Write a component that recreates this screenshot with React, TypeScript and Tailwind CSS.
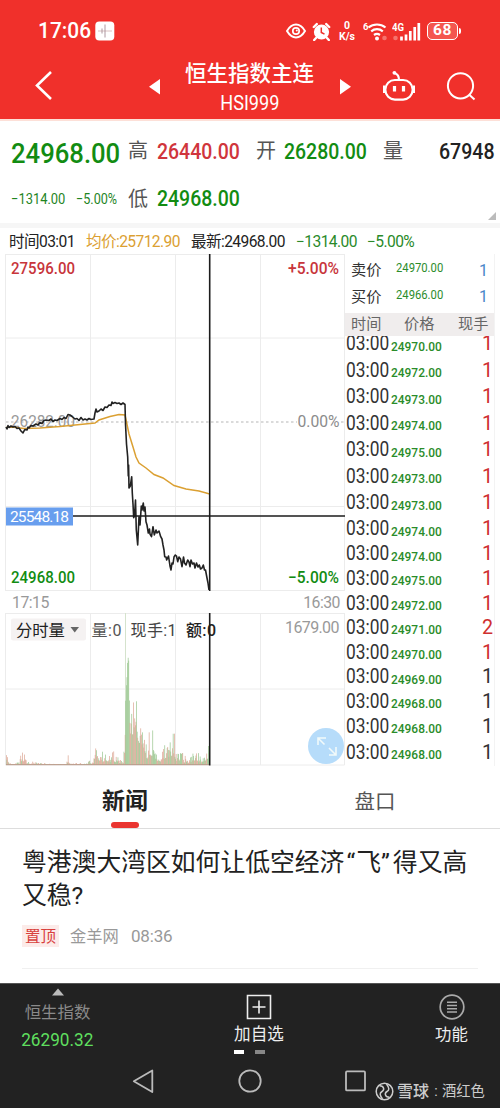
import clsx from "clsx";

type Tick = { price: string; qty: number; up: boolean; h: string };

const ticks: Tick[] = [
  { price: "24970.00", qty: 1, up: true, h: "h-[26.5px]" },
  { price: "24972.00", qty: 1, up: true, h: "h-[26.5px]" },
  { price: "24973.00", qty: 1, up: true, h: "h-[26.5px]" },
  { price: "24974.00", qty: 1, up: true, h: "h-[26.5px]" },
  { price: "24975.00", qty: 1, up: true, h: "h-[26.5px]" },
  { price: "24973.00", qty: 1, up: true, h: "h-[26.5px]" },
  { price: "24973.00", qty: 1, up: true, h: "h-[26.5px]" },
  { price: "24974.00", qty: 1, up: true, h: "h-[25.5px]" },
  { price: "24974.00", qty: 1, up: true, h: "h-[24.6px]" },
  { price: "24975.00", qty: 1, up: true, h: "h-[24.6px]" },
  { price: "24972.00", qty: 1, up: true, h: "h-[24.6px]" },
  { price: "24971.00", qty: 2, up: true, h: "h-[24.6px]" },
  { price: "24970.00", qty: 1, up: true, h: "h-[24.6px]" },
  { price: "24969.00", qty: 1, up: false, h: "h-[24.6px]" },
  { price: "24968.00", qty: 1, up: false, h: "h-[24.6px]" },
  { price: "24968.00", qty: 1, up: false, h: "h-[24.6px]" },
  { price: "24968.00", qty: 1, up: false, h: "h-[27.4px]" },
];

const priceLine =
  "6,173 7,175 8,171.5 9,173.5 11,172 13,173 15,172.5 17,174.5 19,174 21,177 23,179 24,177 25,175.5 27,176 28,173 29,174 31,171.5 33,172 36,170 38,171 40,168.5 42,169.5 44,166.5 46,166 49,166.5 51,165 53,167.5 55,166 57,166.5 60,164.5 62,165.5 64,163.5 66,164.5 68,160.5 70,161 72,162.5 75,165 77,164.5 79,166.5 81,163.5 83,166 85,165 87,166 89,164.5 91,165.5 94,165 95,159 96,155 97,158 99,157 101,155 103,156.5 105,153 107,153.5 109,151 111,151.5 112,148 113,149.5 115,148.5 117,149.5 119,149 121,150.5 123,149 125,150.5 125.5,170 126.5,190 127.7,203 128.3,222 128.6,211 129,234 130.3,232 131.7,222.7 132.3,239 133,250 133.7,263.7 134.5,262 135.5,246 136.3,276 137.7,291 138.3,278 139,262.7 140,271 141.3,252 142,256 143.3,249 144,257 145,253 146,267.7 147,271 148.3,279 149.5,275 150,280 151.5,282.7 153,272.7 154.3,281 156,276 157,279 159,277 160.7,282.7 162,285 163,291 164,296 164.7,302.7 166,303 166.7,306 168.5,302 170,312 171,316 172,309 173,310 174,303 175.3,301 176.5,302 177.7,307.7 179,303 180.5,305 182,312.7 183.5,303 184.5,309 186,311 187.7,306 189,308 190,312.7 191,306 192.5,310 194,309 195,314 196.5,309 198,313 199.3,311 200.5,315 202,314 203.3,311 204.5,316 205.5,316 207,324 208,329 208.7,334 209,336";

const averageLine =
  "6,173.5 12,173 24,174.5 40,174 60,172.5 80,170.5 95,169 99,166 110,162.5 119,160.5 125,161 126.5,168 129,180 133,193 136,203 139,209 146,214 154,220.5 163,224 174,231.5 186,235 199,237 208,239.5 210,240";

// [x, bar height] knots of the volume envelope
const envelope = [
  [6, 38], [6.8, 12], [9, 5], [12, 2], [19, 3], [21, 12], [23, 15], [26, 5], [34, 3], [45, 2],
  [66, 1], [68, 13], [69.5, 2], [87, 2], [89, 11], [91, 2], [94, 10], [95, 38], [96.5, 28], [98, 12],
  [101, 20], [103, 10], [106, 17], [109, 10], [112, 18], [116, 9], [123, 4], [125, 60], [126.2, 96],
  [128.4, 112], [129.2, 62], [132, 52], [133.5, 76], [136.5, 66], [138.5, 40], [141, 46], [143, 30],
  [147, 24], [149, 42], [151, 28], [153.5, 46], [156, 17], [160, 13], [165, 26], [170, 32], [174, 38],
  [176, 14], [180, 14], [181, 28], [183, 10], [188, 8], [195, 18], [200, 9], [205, 16], [209, 30],
];

function envelopeAt(x: number) {
  for (let i = 1; i < envelope.length; i++) {
    const [x0, h0] = envelope[i - 1];
    const [x1, h1] = envelope[i];
    if (x <= x1) return h0 + ((x - x0) / (x1 - x0)) * (h1 - h0);
  }
  return 0;
}

function buildBars() {
  let seed = 11;
  const rnd = () => {
    seed = (seed * 16807) % 2147483647;
    return seed / 2147483647;
  };
  const bars: { x: number; h: number; color: string }[] = [];
  for (let x = 6; x < 209; x += 0.6) {
    const r = rnd();
    const opening = x > 125 && x < 129.5;
    const base = x > 129 && x < 143 ? 0.5 : 0.26;
    const h = envelopeAt(x) * (opening ? 0.85 + 0.15 * r : base + (1 - base) * r * r * r);
    const greenShare = opening ? 0.9 : x > 143 ? 0.5 : 0.35;
    bars.push({ x, h: Math.max(h, 0.8), color: rnd() < greenShare ? "#98c68e" : "#dca592" });
  }
  return bars;
}

const bars = buildBars();

function StatusBar() {
  return (
    <div className="flex h-[62px] items-center pl-[38px] text-white">
      <span className="w-[57px] origin-left scale-x-[0.95] text-[22px] font-medium leading-none">17:06</span>
      <svg width="20" height="20" viewBox="0 0 20 20">
        <rect x="0.3" y="0.5" width="19" height="19" rx="4" fill="#fff" />
        <path d="M3 10h14" stroke="#e2cccc" strokeWidth="1.2" />
        <path d="M10 3.5v13M7 7.5v5" stroke="#a58c96" strokeWidth="0.9" />
      </svg>
      <svg className="ml-[171px]" width="20" height="16" viewBox="0 0 20 16" fill="none" stroke="#fff">
        <path d="M1 8C4 3 7 1.6 10 1.6S16 3 19 8c-3 5-6 6.4-9 6.4S4 13 1 8z" strokeWidth="2" />
        <circle cx="10" cy="8" r="3.2" strokeWidth="1.7" />
        <circle cx="10.8" cy="7.6" r="1" fill="#fff" stroke="none" />
      </svg>
      <svg className="ml-[6px]" width="19" height="19" viewBox="0 0 19 19">
        <circle cx="9.5" cy="10" r="7.6" fill="#fff" />
        <path d="M1.800 5 4.800 2M17.200 5 14.200 2M4 16l-1.800 2M15 16l1.800 2" stroke="#fff" strokeWidth="2.400" strokeLinecap="round" />
        <path d="M9.300 5.600v4.900l3.200 1.700" stroke="#f0302b" strokeWidth="1.500" fill="none" />
      </svg>
      <div className="ml-[6px] flex h-[22px] w-[20px] flex-col items-center justify-between text-[10.500px] font-bold leading-[11px]">
        <span>0</span>
        <span>K/s</span>
      </div>
      <svg className="ml-[6px]" width="25" height="21" viewBox="0 0 25 21" fill="none" stroke="#fff">
        <text x="0" y="9" fontSize="9.500" fontWeight="700" fill="#fff" stroke="none">6</text>
        <path d="M5.500 6.500a13.500 13.500 0 0 1 17 0M8.200 10.300a9 9 0 0 1 11.600 0M11 14a5 5 0 0 1 6 0" strokeWidth="2.200" />
        <circle cx="14" cy="17.600" r="2" fill="#fff" stroke="none" />
        <circle cx="21.500" cy="17" r="2.300" fill="#f5736d" stroke="none" />
      </svg>
      <svg className="ml-[4px]" width="30" height="21" viewBox="0 0 30 21">
        <text x="0" y="9.500" fontSize="10.500" fontWeight="700" fill="#fff" textLength="12" lengthAdjust="spacingAndGlyphs">4G</text>
        <circle cx="3.500" cy="17" r="2.300" fill="#f5736d" />
        <path d="M9.500 19.500v-4M14 19.500v-6M18.300 19.500V10M22.700 19.500V6M26.800 19.500V2" stroke="#fff" strokeWidth="2.700" />
      </svg>
      <div className="ml-[5px] flex h-[18px] w-[31px] items-center justify-center rounded-[5px] border-[1.5px] border-white bg-[#f4564f] text-[15.500px] font-bold leading-none tracking-[0.500px]">
        68
      </div>
      <div className="ml-px h-[6px] w-[2px] rounded-r bg-white" />
    </div>
  );
}

function TitleBar() {
  return (
    <div className="flex h-[57px] text-white">
      <div className="w-[146px] pl-[34px] pt-[8px]">
        <svg width="20" height="31" viewBox="0 0 20 31" fill="none">
          <path d="M17 2 3 15.500 17 29" stroke="#fff" strokeWidth="2.600" />
        </svg>
      </div>
      <svg className="mt-[16px]" width="16" height="18" viewBox="0 0 16 18">
        <path d="M3 8.800 14 1v15.600z" fill="#fff" />
      </svg>
      <div className="flex w-[175px] flex-col items-center">
        <h1 className="text-[21.500px] font-medium leading-[24px]">恒生指数主连</h1>
        <span className="mt-[6px] scale-x-[0.93] text-[19.500px] leading-[24px]">HSI999</span>
      </div>
      <svg className="mt-[16px]" width="16" height="18" viewBox="0 0 16 18">
        <path d="M14 8.800 3 1v15.600z" fill="#fff" />
      </svg>
      <svg className="ml-[29px] mt-[6px]" width="34" height="34" viewBox="0 0 34 34" fill="none" stroke="#fff">
        <rect x="3.400" y="12" width="27.200" height="19.600" rx="9.500" strokeWidth="2.100" />
        <path d="M2 17.500v7.500M32 17.500v7.500" strokeWidth="2" />
        <path d="M17 12c0-3.500-.8-5.600-4-6.800" strokeWidth="2.200" />
        <circle cx="12.400" cy="4.800" r="1.900" fill="#fff" stroke="none" />
        <path d="M12.500 18v5.500M21.500 18v5.500" strokeWidth="3.200" />
      </svg>
      <svg className="ml-[29px] mt-[9px]" width="32" height="32" viewBox="0 0 32 32" fill="none" stroke="#fff" strokeWidth="2">
        <circle cx="15.500" cy="14.800" r="12.600" />
        <path d="m24 23.500 5.500 5" />
      </svg>
    </div>
  );
}

function Quote() {
  return (
    <section className="h-[102px] overflow-hidden pt-[15px] font-medium leading-none">
      <div className="flex h-[32px] items-center pl-[11px]">
        <span className="w-[117px] origin-left scale-x-[0.9] pt-[4px] text-[28.500px] text-[#128c12]">24968.00</span>
        <span className="w-[29px] pb-[2px] text-[20px] font-normal text-[#555]">高</span>
        <span className="w-[99px] origin-left scale-x-[0.905] text-[21.500px] text-[#d0353c]">26440.00</span>
        <span className="w-[28px] pb-[2px] text-[20px] font-normal text-[#555]">开</span>
        <span className="w-[99px] origin-left scale-x-[0.905] text-[21.500px] text-[#128c12]">26280.00</span>
        <span className="w-[40px] pb-[2px] text-[20px] font-normal text-[#555]">量</span>
        <span className="flex-1 origin-right scale-x-[0.91] pr-[6px] text-right text-[21.500px] text-[#222]">67948</span>
      </div>
      <div className="mt-[15px] flex h-[32px] items-center pl-[11px]">
        <span className="w-[65px] origin-left scale-x-[0.88] text-[14.700px] font-normal text-[#1f851f]">−1314.00</span>
        <span className="w-[52px] origin-left scale-x-[0.86] text-[14.700px] font-normal text-[#1f851f]">−5.00%</span>
        <span className="w-[29px] pb-px text-[20px] font-normal text-[#555]">低</span>
        <span className="w-[338px] origin-left scale-x-[0.905] text-[21.500px] text-[#128c12]">24968.00</span>
      </div>
      <div className="flex justify-end pr-[4px]">
        <svg width="8" height="8" viewBox="0 0 8 8" className="-mt-[3px]">
          <path d="M8 0v8H0z" fill="#bbb" />
        </svg>
      </div>
    </section>
  );
}

function PriceChart() {
  return (
    <svg className="block" width="345" height="337" viewBox="0 0 345 337">
      <g stroke="#ececec" fill="none">
        <path d="M5.500 .5H344.500M5.500 84H344.500M5.500 252.500H344.500M5.500 336.500H344.500" />
        <path d="M5.500 0V337M90.500 0V337M175.500 0V337M260.500 0V337M344.500 0V337" />
      </g>
      <path d="M6 168H344" stroke="#b5b5b5" strokeWidth="1.200" strokeDasharray="2.500 2.500" />
      <g fontWeight="500" fontSize="16.500">
        <text x="11" y="20" fill="#c8353b" textLength="64" lengthAdjust="spacingAndGlyphs">27596.00</text>
        <text x="288" y="20" fill="#c8353b" textLength="51" lengthAdjust="spacingAndGlyphs">+5.00%</text>
        <text x="11" y="172.500" fill="#999" fontWeight="400" textLength="64" lengthAdjust="spacingAndGlyphs">26282.00</text>
        <rect x="297" y="160" width="43" height="15" fill="#fff" />
        <text x="297.500" y="172.500" fill="#8c8c8c" fontWeight="400" textLength="42" lengthAdjust="spacingAndGlyphs">0.00%</text>
        <text x="11" y="328.500" fill="#128c12" textLength="64" lengthAdjust="spacingAndGlyphs">24968.00</text>
        <text x="288" y="328.500" fill="#128c12" textLength="51" lengthAdjust="spacingAndGlyphs">−5.00%</text>
      </g>
      <polyline points={averageLine} fill="none" stroke="#dba032" strokeWidth="1.500" />
      <polyline points={priceLine} fill="none" stroke="#222" strokeWidth="1.600" strokeLinejoin="round" />
      <path d="M6 262H345M209.700 0V337" stroke="#1c1c1c" strokeWidth="1.600" />
      <rect x="6" y="253.500" width="67" height="18" fill="#689eee" />
      <text x="10" y="268" fontSize="15.500" fill="#fff" textLength="59">25548.18</text>
    </svg>
  );
}

function VolumeChart() {
  return (
    <div className="relative">
      <svg className="block" width="345" height="153" viewBox="0 0 345 153">
        <g stroke="#ececec" fill="none">
          <path d="M5.500 .5H344.500M5.500 76H344.500M5.500 152H344.500" />
          <path d="M5.500 0V152M90.500 0V152M175.500 0V152M260.500 0V152M344.500 0V152" />
        </g>
        <path d="M125.500 0V152" stroke="#d5e3cd" />
        {bars.map((bar) => (
          <rect key={bar.x} x={bar.x} y={152 - bar.h} width="0.700" height={bar.h} fill={bar.color} />
        ))}
        <path d="M6 151.700H209" stroke="#b99a8c" strokeWidth="1" />
        <rect x="11" y="5.500" width="75" height="22" rx="2" fill="#f5f2f2" />
        <text x="16" y="22.500" fontSize="16.300" fill="#222">分时量</text>
        <path d="M70.500 14h8.500l-4.250 5.500z" fill="#666" />
        <g fontSize="16">
          <text x="91.500" y="22.500" fill="#555" textLength="30">量:0</text>
          <text x="130.500" y="22.500" fill="#444" textLength="46">现手:1</text>
          <text x="186" y="22.500" fill="#222" fontWeight="500" textLength="30">额:0</text>
          <text x="285" y="20" fill="#999" textLength="54.500">1679.00</text>
        </g>
        <path d="M209.700 0V152.500" stroke="#1c1c1c" strokeWidth="1.600" />
      </svg>
      <button className="absolute right-[1px] top-[115px] size-9 rounded-full bg-[#b6dcfa]" aria-label="expand">
        <svg width="36" height="36" viewBox="0 0 36 36" fill="none" stroke="#f2fafa" strokeWidth="1.600">
          <path d="M10 17v-7h8M10.500 10.500l6 6M28 19v8h-7M27.500 26.500l-6.500-6.500" />
        </svg>
      </button>
    </div>
  );
}

function OrderBook() {
  return (
    <aside className="h-[512px] w-[150px] overflow-hidden border-r border-[#f3f3f3] leading-none">
      {[
        ["卖价", "24970.00"],
        ["买价", "24966.00"],
      ].map(([label, price]) => (
        <div key={label} className="flex h-[26.500px] items-center pl-[6px] pt-[7px]">
          <span className="w-[45px] text-[15.200px] text-[#333]">{label}</span>
          <span className="w-[78px] origin-left scale-x-[0.9] pb-[5px] text-[12.500px] text-[#2c8c2c]">{price}</span>
          <span className="w-[14px] text-right text-[16px] text-[#4a86c8]">1</span>
        </div>
      ))}
      <div className="relative z-10 mt-[6px] flex h-[23px] items-center bg-[#f0eded] pl-[6px] pt-px text-[15.200px] text-[#666]">
        <span className="w-[53px]">时间</span>
        <span className="w-[54px]">价格</span>
        <span>现手</span>
      </div>
      <div className="-mt-[5px]">
        {ticks.map((t, i) => (
          <div key={i} className={clsx("flex items-center pl-[1px]", t.h)}>
            <span className="w-[45px] origin-left scale-x-[0.88] text-[19.700px] text-[#333]">03:00</span>
            <span className="w-[60px] origin-left scale-x-[0.885] pt-[4px] text-[13.500px] font-medium text-[#2a8c2a]">{t.price}</span>
            <span className={clsx("flex-1 pr-[1px] text-right text-[19.700px]", t.up ? "text-[#cf2f2f]" : "text-[#333]")}>
              {t.qty}
            </span>
          </div>
        ))}
      </div>
    </aside>
  );
}

function Market() {
  return (
    <section>
      <div className="flex h-[26px] items-center pl-[9px] pt-[4px] text-[15.600px] leading-none tracking-[-0.600px] text-[#222]">
        <span className="w-[77px]">时间03:01</span>
        <span className="w-[105px] text-[#dba032]">均价:25712.90</span>
        <span className="w-[105px]">最新:24968.00</span>
        <span className="w-[71px] text-[#2a8a2a]">−1314.00</span>
        <span className="text-[#2a8a2a]">−5.00%</span>
      </div>
      <div className="flex">
        <div className="w-[345px]">
          <PriceChart />
          <div className="flex h-[22px] items-center justify-between pl-[12px] pr-[5px] pt-[2px] text-[15.800px] leading-none tracking-[-0.500px] text-[#999]">
            <span>17:15</span>
            <span>16:30</span>
          </div>
          <VolumeChart />
        </div>
        <OrderBook />
      </div>
    </section>
  );
}

function News() {
  return (
    <section className="h-[217px]">
      <nav className="grid h-[63px] grid-cols-2 border-b border-[#ddd]">
        <div className="flex flex-col items-center justify-between pt-[20px]">
          <span className="text-[23px] font-bold leading-[32px] text-[#222]">新闻</span>
          <span className="h-[6px] w-[28px] rounded-full bg-[#ea3530]" />
        </div>
        <span className="pt-[20px] text-center text-[20.500px] leading-[32px] text-[#555]">盘口</span>
      </nav>
      <article className="mx-[22px] h-[140px] border-b border-[#f0f0f0] pt-[17px]">
        <h2 className="whitespace-nowrap text-[24.800px] leading-[33px] text-[#222]">
          粤港澳大湾区如何让低空经济<span className="ml-[2px] tracking-[1px]">“</span>飞<span className="tracking-[3px]">”</span>得又高
          <br />
          又稳?
        </h2>
        <div className="mt-[13px] flex items-center leading-none text-[#999]">
          <span className="flex h-[22px] w-[37px] items-center justify-center bg-[#fcebe9] pt-[3px] text-[15.500px] text-[#d8403c]">置顶</span>
          <span className="ml-[11px] w-[61px] pt-[2px] text-[16.300px]">金羊网</span>
          <span className="pt-px text-[17px] tracking-[-0.200px]">08:36</span>
        </div>
      </article>
    </section>
  );
}

function Footer() {
  return (
    <footer className="h-[126px] overflow-hidden border-t border-[#555] bg-[#222] leading-none">
      <div className="flex h-[73px]">
        <div className="flex w-[115px] flex-col items-center pt-[4px]">
          <svg width="12" height="8" viewBox="0 0 12 8">
            <path d="M6 0.500 12 7.500H0z" fill="#bbb" />
          </svg>
          <span className="mt-[9px] text-[16.400px] text-[#8a8a8a]">恒生指数</span>
          <span className="mt-[10px] scale-x-[0.92] text-[18.700px] text-[#5fdf5f]">26290.32</span>
        </div>
        <div className="flex w-[288px] flex-col items-center pt-[10px]">
          <svg width="26" height="26" viewBox="0 0 26 26" fill="none" stroke="#eee" strokeWidth="1.600">
            <path d="M1.500 1.500h23v23h-23zM13 6.500v13M6.500 13h13" />
          </svg>
          <span className="mt-[7px] text-[16.600px] text-[#eee]">加自选</span>
          <div className="mt-[6px] flex w-[50px] gap-[11px]">
            <span className="h-[4px] w-[10px] bg-white" />
            <span className="h-[4px] w-[10px] bg-[#888]" />
          </div>
        </div>
        <div className="flex w-[97px] flex-col items-center pt-[10px]">
          <svg width="26" height="26" viewBox="0 0 26 26" fill="none" stroke="#aaa" strokeWidth="1.700">
            <circle cx="13" cy="13" r="11.800" />
            <path d="M8 8.300h10M8 11.500h10M8 14.700h10M8 18h10" strokeWidth="1.400" />
          </svg>
          <span className="mt-[7px] text-[16.400px] text-[#eee]">功能</span>
        </div>
      </div>
      <div className="flex pt-[11px]">
        <svg className="ml-[131px]" width="24" height="26" viewBox="0 0 24 26" fill="none" stroke="#bbb" strokeWidth="1.800">
          <path d="M21.300 2.500v21.500L2.800 13.200z" strokeLinejoin="round" />
        </svg>
        <svg className="ml-[82px]" width="26" height="26" viewBox="0 0 26 26" fill="none" stroke="#bbb" strokeWidth="1.800">
          <circle cx="13" cy="13" r="10.700" />
        </svg>
        <svg className="ml-[80px]" width="26" height="26" viewBox="0 0 26 26" fill="none" stroke="#bbb" strokeWidth="1.800">
          <rect x="3" y="3.400" width="19" height="19" rx="1" />
        </svg>
        <div className="ml-[6px] flex items-center gap-[3px] pt-[14px] text-[#ccc]">
          <svg width="19" height="19" viewBox="0 0 19 19" fill="none" stroke="#ccc" strokeWidth="1.500">
            <circle cx="9.500" cy="9.500" r="8.300" />
            <path d="M4.500 3.700C9.500 4 9.500 8 7 9.500S4.500 13 7.500 17M14.500 15.300C9.500 15 9.500 11 12 9.500S14.500 6 11.500 2" />
          </svg>
          <span className="flex text-[14.300px] leading-[15px]">
            <span className="w-[33px] text-[16px] font-medium">雪球</span>
            <span className="w-[12px] text-center">:</span>酒红色
          </span>
        </div>
      </div>
    </footer>
  );
}

export default function App() {
  return (
    <div className="h-[1108px] w-[500px] overflow-hidden bg-white font-[Roboto,'Noto_Sans_CJK_SC',sans-serif]">
      <header className="h-[121px] border-b-2 border-[#fde0d8] bg-[#f0302b]">
        <StatusBar />
        <TitleBar />
      </header>
      <Quote />
      <div className="h-[5px] bg-[#f6f6f6]" />
      <Market />
      <News />
      <Footer />
    </div>
  );
}
